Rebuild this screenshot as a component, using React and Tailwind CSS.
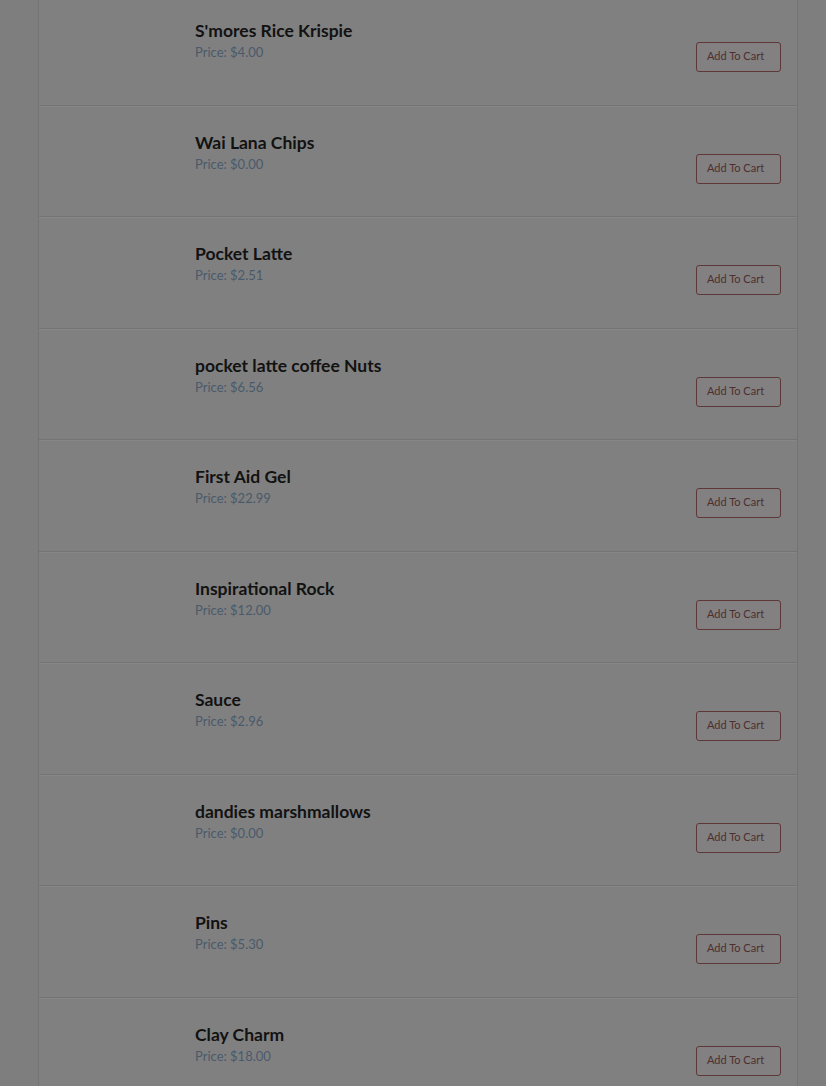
import React from "react";

const items = [
  ["S'mores Rice Krispie", "$4.00"],
  ["Wai Lana Chips", "$0.00"],
  ["Pocket Latte", "$2.51"],
  ["pocket latte coffee Nuts", "$6.56"],
  ["First Aid Gel", "$22.99"],
  ["Inspirational Rock", "$12.00"],
  ["Sauce", "$2.96"],
  ["dandies marshmallows", "$0.00"],
  ["Pins", "$5.30"],
  ["Clay Charm", "$18.00"],
];

export default function App() {
  return (
    <div
      className="w-[826px] h-[1086px] overflow-hidden bg-[#7e7e7e]"
      style={{ fontFamily: "Lato, 'Open Sans', sans-serif" }}
    >
      <div className="ml-[38px] w-[760px] -mt-[6px] border-x border-[#747474] bg-[#808080]">
        {items.map(([name, price], i) => (
          <div
            key={i}
            className="h-[111.5px] flex border-b border-[#747474] shadow-[0_1px_0_#868686]"
          >
            <div className="w-[156px] shrink-0" />
            <div className="flex-1 pt-[26px]">
              <div className="text-[17.5px] leading-[22px] font-bold text-[#121212]">{name}</div>
              <div className="text-[13px] leading-[21px] text-[#4a5a6a]">Price: {price}</div>
            </div>
            <div className="pr-[16px] pt-[48px]">
              <button className="h-[30px] w-[85px] rounded-[3px] border border-[#5e3838] bg-[#828080] text-left pl-[10px] text-[11px] text-[#4e2f2f] pb-[1px]">
                Add To Cart
              </button>
            </div>
          </div>
        ))}
      </div>
    </div>
  );
}
